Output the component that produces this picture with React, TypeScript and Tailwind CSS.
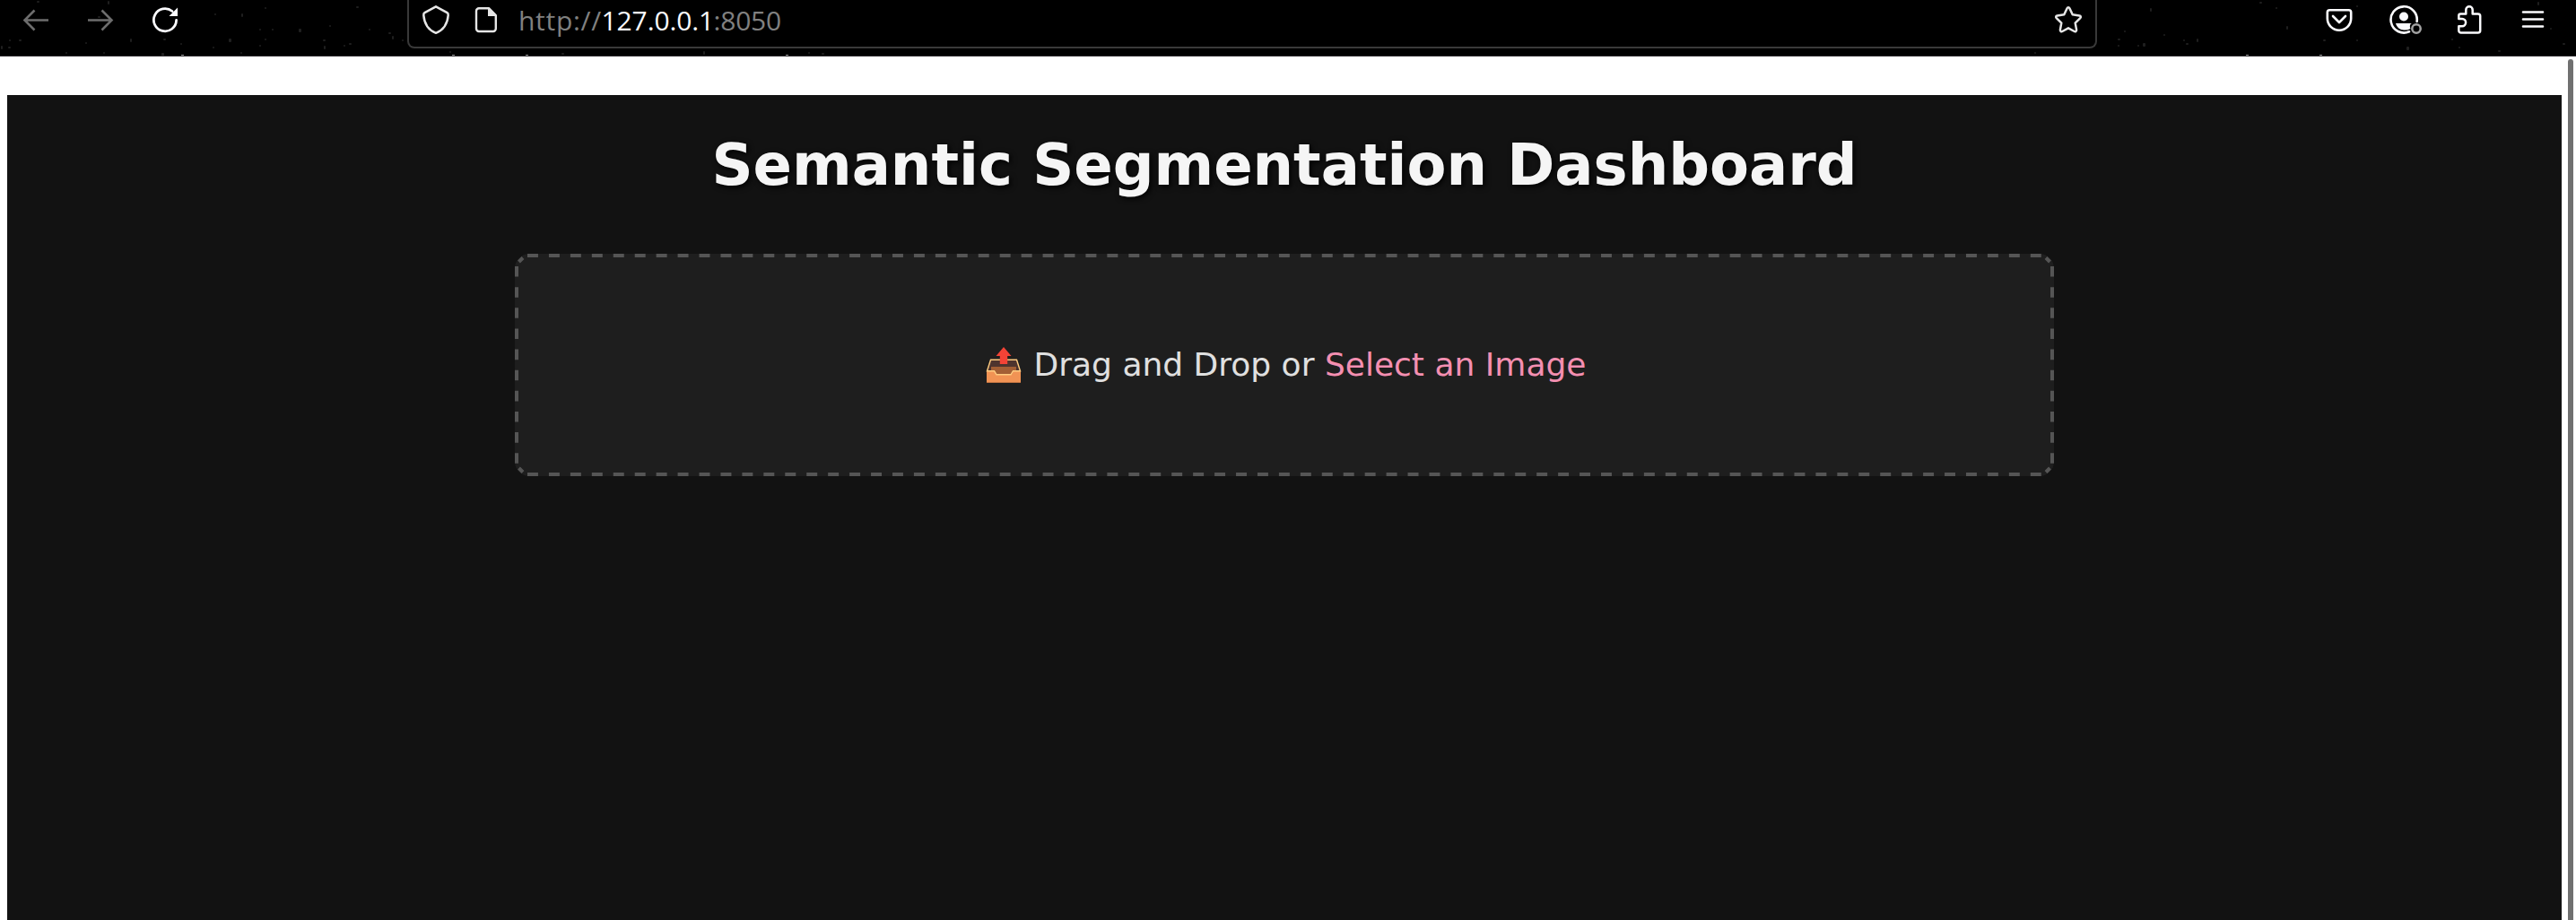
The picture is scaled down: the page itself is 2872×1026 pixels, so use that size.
const SPECKS = [
  [41, 1], [120, 1], [295, 8], [397, 7], [239, 15], [269, 15], [109, 18], [289, 32], [303, 32], [333, 32], [367, 28], [411, 32],
  [433, 36], [437, 40], [10, 44], [21, 44], [95, 47], [145, 43], [182, 43], [201, 48], [237, 52], [255, 43], [295, 43],
  [289, 50], [360, 44], [361, 51], [383, 50], [389, 48], [448, 44], [1, 51], [9, 52], [73, 58], [115, 58], [180, 59], [268, 58],
  [501, 57], [626, 59], [784, 57], [901, 58], [916, 59], [2368, 34], [2397, 9], [2361, 43], [2361, 50], [2383, 50], [2389, 48],
  [2412, 38], [2434, 44], [2437, 48], [2449, 43], [2268, 58], [2519, 2], [2537, 8], [2549, 29], [2590, 44], [2627, 6], [2627, 44],
  [2683, 52], [2733, 43], [2741, 52], [2785, 56], [2829, 2], [2843, 31], [2857, 48],
];

function Specks() {
  return (
    <svg className="pointer-events-none absolute inset-0 size-full" aria-hidden="true">
      {SPECKS.map(([x, y], i) => (
        <rect key={i} x={x} y={y} width={i % 3 === 0 ? 3 : 2} height={i % 4 === 1 ? 4 : 2} rx="1" fill="#1f1f1f" />
      ))}
      {[202, 504, 586, 876, 2504, 2586].map((x) => (
        <rect key={x} x={x} y="61" width="3" height="1" fill="#999" />
      ))}
    </svg>
  );
}

const line = { fill: "none", stroke: "currentColor", strokeLinecap: "round", strokeLinejoin: "round" } as const;

function Toolbar() {
  return (
    <header className="relative flex h-[63px] w-full shrink-0 items-start overflow-hidden border-b border-[#2c2a2d] bg-black text-[#fbfbfe]">
      <Specks />
      <svg className="ml-6 h-[45px] w-8 text-[#6d6d6d]" viewBox="0 0 32 45" {...line} strokeLinecap="butt" strokeLinejoin="miter" strokeWidth="2.6">
        <path d="M30 22.5H4M14.5 11.5l-11 11 11 11" />
      </svg>
      <svg className="ml-10 h-[45px] w-8 text-[#6d6d6d]" viewBox="0 0 32 45" {...line} strokeLinecap="butt" strokeLinejoin="miter" strokeWidth="2.6">
        <path d="M2 22.5h26M17.500 11.5l11 11-11 11" />
      </svg>
      <svg className="ml-10 h-[45px] w-8" viewBox="0 0 32 45" {...line} strokeWidth="2.8">
        <path d="M28.600 22.500A12.600 12.600 0 1 1 24 12.500" />
        <path d="M30 8.500v9.500h-9.500z" fill="currentColor" stroke="none" />
      </svg>
      <div className="ml-[254px] flex h-[54px] w-[1884px] shrink-0 items-start rounded-b-lg border-2 border-t-0 border-[#393939] bg-black">
        <svg className="ml-[14px] h-[45px] w-8 text-[#e6e6e6]" viewBox="0 0 32 45" {...line} strokeWidth="2.500">
          <path d="M16 7.300 28.500 14.200c1.300.7 1.300 1.600 1.200 2.800C28.900 27 24.500 33.500 16 36.800 7.500 33.500 3.100 27 2.300 17c-.1-1.200-.1-2.100 1.200-2.800z" />
        </svg>
        <svg className="ml-6 h-[45px] w-8 text-[#e6e6e6]" viewBox="0 0 32 45" {...line} strokeWidth="2.400">
          <path d="M8 9.200h11l7.800 7.800v15a3 3 0 0 1-3 3H8a3 3 0 0 1-3-3V12.200a3 3 0 0 1 3-3z" />
          <path d="M18 9v9h9z" fill="currentColor" stroke="none" />
        </svg>
        <div className="ml-5 flex h-[45px] items-center font-['Open_Sans','Noto_Sans',sans-serif] text-[30px] leading-[45px] text-[#808080]">
          <span className="w-[92.500px] tracking-[0.7px]">http://</span>
          <span className="w-[125px] tracking-[-0.1px] text-[#fbfbfe]">127.0.0.1</span>
          <span className="tracking-[-0.2px]">:8050</span>
        </div>
        <svg className="mr-[14px] ml-auto h-[45px] w-8 text-[#e6e6e6]" viewBox="0 0 32 45" {...line} strokeWidth="2.500">
          <path d="M14.600 9.300c.6-1.300 2.200-1.300 2.800 0l3.300 7 7.700 1.100c1.400.2 1.900 1.800.9 2.800l-5.600 5.400 1.400 7.700c.2 1.400-1.200 2.400-2.400 1.700L16 31.300 9.300 35c-1.200.7-2.600-.3-2.400-1.700l1.400-7.700-5.600-5.400c-1-1-.5-2.600.9-2.800l7.700-1.100z" />
        </svg>
      </div>
      <svg className="ml-[254px] h-[45px] w-8 shrink-0" viewBox="0 0 32 45" {...line} strokeWidth="2.600">
        <path d="M5.300 11.300h21.400a2.500 2.500 0 0 1 2.500 2.500v6.700a13.200 13.200 0 0 1-26.400 0v-6.700a2.500 2.500 0 0 1 2.500-2.500z" />
        <path d="m9 18 7 7 7-7" />
      </svg>
      <svg className="ml-10 h-[45px] w-10 shrink-0" viewBox="0 0 40 45" {...line} strokeWidth="2.600">
        <path d="M30.600 24A14.600 14.600 0 1 0 22 35.300" />
        <circle cx="16" cy="18.500" r="5" fill="currentColor" stroke="none" />
        <path d="M7 26h18c-1.500 0-3 3-1.500 6a12 12 0 0 1-7.500 1.500c-4 0-8-3-9-7.500z" fill="currentColor" stroke="none" />
        <circle cx="30" cy="32" r="4.700" stroke="#a3a3a3" strokeWidth="2.500" />
      </svg>
      <svg className="ml-8 h-[45px] w-8 shrink-0" viewBox="0 0 32 45" {...line} strokeWidth="2.500">
        <path d="M5.300 21v-3.500a2 2 0 0 1 2-2h6V11a3.700 3.700 0 0 1 7.400 0v4.500h6a2.500 2.500 0 0 1 2.500 2.500v16a2.500 2.500 0 0 1-2.500 2.500H7.800A2.500 2.500 0 0 1 5.300 34v-4.800h3.700a4.100 4.100 0 0 0 0-8.200z" />
      </svg>
      <svg className="ml-10 h-[45px] w-8 shrink-0" viewBox="0 0 32 45" {...line} strokeWidth="2.600">
        <path d="M5 13.500h22M5 21.500h22M5 29.500h22" />
      </svg>
    </header>
  );
}

/** Outlined dashes whose spacing is spread evenly along each side. */
function DashedOutline() {
  return (
    <svg className="pointer-events-none absolute inset-0 size-full" viewBox="0 0 1716 248" fill="none" stroke="#555" strokeWidth="4" aria-hidden="true">
      <path d="M14 2H1702M14 246H1702" strokeDasharray="11.97 11.97" />
      <path d="M2 14V234M1714 14V234" strokeDasharray="11.57 11.57" />
      <path d="m4.500 9 4.500-4.500M1711.500 9l-4.500-4.500M4.500 239l4.500 4.500M1711.500 239l-4.500 4.500" />
    </svg>
  );
}

function OutboxIcon() {
  return (
    <svg className="mr-[13px] ml-0.5 h-[42px] w-[42px] shrink-0" viewBox="0 0 42 42" aria-hidden="true">
      <path d="M6.500 15h29l4 13H2.500z" fill="#4e342e" />
      <path d="M7 23h28v10H7z" fill="#a35f35" />
      <path d="M2 27.500h9l2 4h17l2-4h8V41H2z" fill="#f19354" />
      <path d="M2.500 27.800 6.500 15.200h29l4 12.600h-8l-2.500 4h-16l-2.500-4z" fill="none" stroke="#ffcc80" strokeWidth="1.400" />
      <path d="M2 40.500h38" stroke="#c77642" />
      <path d="m21 1 8.500 10h-4.300v9h-8.400v-9h-4.300z" fill="#f44336" />
    </svg>
  );
}

export default function App() {
  return (
    <div className="flex h-[1026px] w-[2872px] flex-col overflow-hidden bg-white">
      <Toolbar />
      <div className="flex min-h-0 flex-1">
        <main className="mt-[43px] ml-2 flex w-[2848px] flex-col items-center bg-[#121212] pt-[41px] font-['DejaVu_Sans',sans-serif]">
          <h1 className="text-[64px] leading-[75px] font-bold whitespace-nowrap text-[#f5f5f5] [text-shadow:2px_2px_6px_#000]">
            Semantic Segmentation Dashboard
          </h1>
          <section className="relative mt-[61px] flex h-[248px] w-[1716px] items-center justify-center rounded-2xl bg-[#1e1e1e]">
            <DashedOutline />
            <OutboxIcon />
            <p className="text-[36px] leading-[54px] whitespace-nowrap text-[#e0e0e0]">
              Drag and Drop or <a className="text-[#f48fb1]">Select an Image</a>
            </p>
          </section>
        </main>
        <div className="mt-[3px] ml-[7px] w-1.5 rounded-t-full bg-[#707070]" />
      </div>
    </div>
  );
}
